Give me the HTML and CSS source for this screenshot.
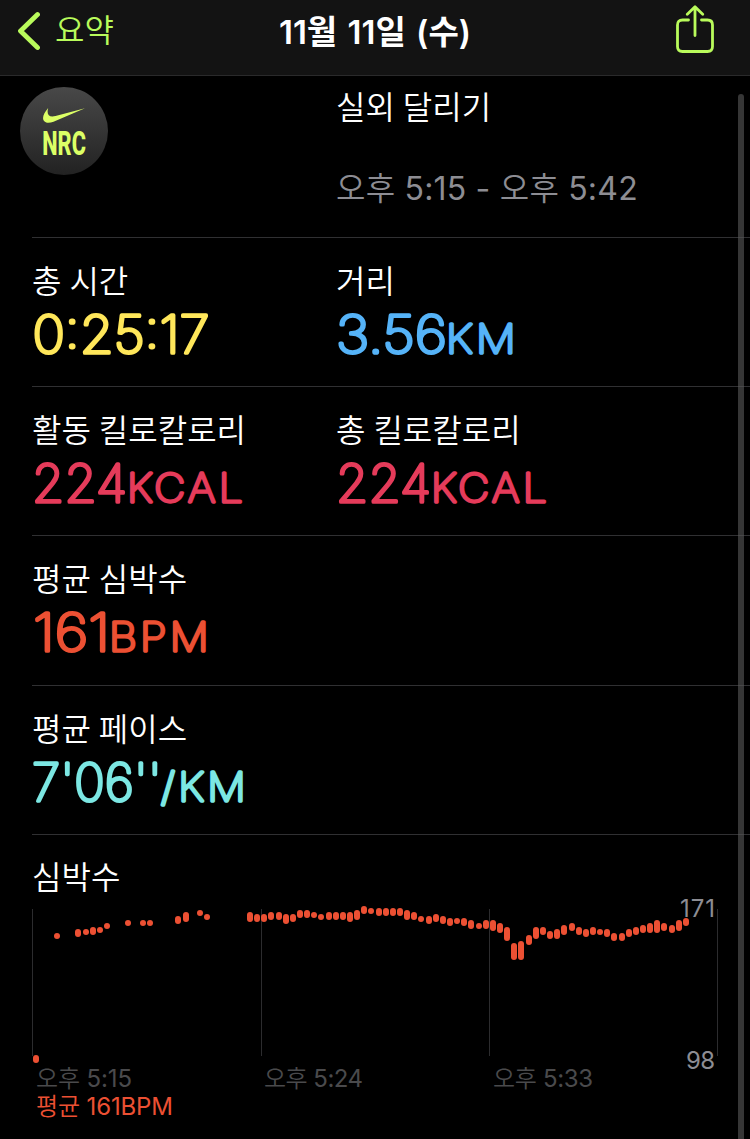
FILE: index.html
```html
<!DOCTYPE html>
<html lang="ko">
<head>
    <meta charset="UTF-8">
    <meta name="viewport" content="width=device-width, initial-scale=1.0">
    <title>실외 달리기</title>
    <link rel="stylesheet" href="styles.css">
</head>
<body>
    <!-- 상단 바 -->
    <header class="nav-bar">
        <a href="#" class="back-button">
            <svg width="24" height="40" viewBox="0 0 24 40"><path d="M21.5 3.5 L4.5 20 L21.5 36.5"/></svg>
            <span>요약</span>
        </a>
        <h1>11월 11일 (수)</h1>
        <button class="share-button" aria-label="공유">
            <svg width="40" height="50" viewBox="0 0 40 50">
                <path d="M13.5 15 H7.5 Q2.5 15 2.5 20 V41.5 Q2.5 46.5 7.5 46.5 H32.5 Q37.5 46.5 37.5 41.5 V20 Q37.5 15 32.5 15 H26.5"/>
                <path d="M20 30.5 V2.5 M12.3 9.3 L20 1.7 L27.7 9.3"/>
            </svg>
        </button>
    </header>

    <main>
        <!-- 운동 종류 -->
        <section class="workout">
            <div class="app-icon">
                <svg width="42" height="15" viewBox="0 0 42 15"><path d="M5.2 0 C0.5 5.5 -1.6 10.5 1.6 13.6 C3.6 15.5 7.2 15 10.5 13.7 L42 0.2 L12.5 8 C6 9.7 3.3 6.5 5.2 0 Z"/></svg>
                <span>NRC</span>
            </div>
            <div class="workout-info">
                <p class="label">실외 달리기</p>
                <p class="period">오후 5:15 - 오후 5:42</p>
            </div>
        </section>

        <!-- 기록 -->
        <section class="row">
            <div class="cell">
                <p class="label">총 시간</p>
                <svg class="value time" width="300" height="60"><text x="0.500" y="49" textLength="177" lengthAdjust="spacingAndGlyphs">0:25:17</text></svg>
            </div>
            <div class="cell">
                <p class="label">거리</p>
                <svg class="value distance" width="300" height="60"><text x="0" y="49" textLength="111" lengthAdjust="spacingAndGlyphs">3.56</text><text class="unit" x="110" y="49" textLength="73" lengthAdjust="spacingAndGlyphs">KM</text></svg>
            </div>
        </section>
        <section class="row">
            <div class="cell">
                <p class="label">활동 킬로칼로리</p>
                <svg class="value calorie" width="300" height="60"><text x="0" y="49" textLength="95" lengthAdjust="spacingAndGlyphs">224</text><text class="unit" x="95" y="49" textLength="119" lengthAdjust="spacingAndGlyphs">KCAL</text></svg>
            </div>
            <div class="cell">
                <p class="label">총 킬로칼로리</p>
                <svg class="value calorie" width="300" height="60"><text x="0" y="49" textLength="95" lengthAdjust="spacingAndGlyphs">224</text><text class="unit" x="95" y="49" textLength="119" lengthAdjust="spacingAndGlyphs">KCAL</text></svg>
            </div>
        </section>
        <section class="row">
            <div class="cell">
                <p class="label">평균 심박수</p>
                <svg class="value heart" width="300" height="60"><text x="1" y="49" textLength="77" lengthAdjust="spacingAndGlyphs">161</text><text class="unit" x="77" y="49" textLength="103" lengthAdjust="spacingAndGlyphs">BPM</text></svg>
            </div>
        </section>
        <section class="row">
            <div class="cell">
                <p class="label">평균 페이스</p>
                <svg class="value pace" width="300" height="60"><text x="0" y="49" textLength="130" lengthAdjust="spacingAndGlyphs">7'06''</text><text class="unit" x="129" y="49" textLength="88" lengthAdjust="spacingAndGlyphs">/KM</text></svg>
            </div>
        </section>

        <!-- 심박수 그래프 -->
        <section class="chart">
            <p class="label">심박수</p>
            <svg class="chart-plot" width="750" height="249" viewBox="0 -10 750 249">
                <path class="grid" d="M32.5 9 V156 M261.5 9 V156 M489.5 9 V156 M717.5 9 V156"/>
                <g id="beats"></g>
                <text class="limit" x="680" y="17" textLength="35">171</text>
                <text class="limit" x="686" y="169" textLength="29">98</text>
                <text class="tick" x="36" y="187" textLength="96">오후 5:15</text>
                <text class="tick" x="264" y="187" textLength="99">오후 5:24</text>
                <text class="tick" x="493" y="187" textLength="100">오후 5:33</text>
                <text class="average" x="36" y="215" textLength="137">평균 161BPM</text>
            </svg>
        </section>
    </main>
    <div class="scrollbar"></div>

    <script>
        // [x, 위, 아래]
        const beats = [
            [36, 155, 163], [57, 33, 39], [78, 29, 37], [86, 29, 35], [93, 27, 35], [100, 27, 33],
            [107, 23, 29], [128, 20, 26], [143, 20, 26], [150, 20, 26], [178, 16, 24], [186, 12, 22],
            [200, 10, 16], [207, 14, 20], [250, 12, 22], [257, 14, 22], [264, 14, 22], [271, 12, 20],
            [279, 12, 20], [286, 14, 24], [293, 14, 22], [300, 10, 18], [307, 10, 18], [314, 12, 18],
            [321, 14, 20], [329, 12, 20], [336, 12, 20], [343, 12, 20], [350, 12, 22], [357, 10, 20],
            [364, 6, 14], [371, 8, 14], [379, 8, 16], [386, 8, 16], [393, 8, 16], [400, 8, 16],
            [407, 10, 20], [414, 12, 20], [421, 16, 22], [429, 16, 24], [436, 14, 22], [443, 16, 24],
            [450, 18, 26], [457, 18, 24], [464, 18, 26], [471, 20, 29], [479, 23, 29], [486, 20, 29],
            [493, 20, 31], [500, 23, 33], [507, 27, 41], [514, 43, 60], [521, 41, 60], [529, 35, 45],
            [536, 27, 39], [543, 27, 35], [550, 31, 39], [557, 29, 39], [564, 25, 35], [572, 23, 31],
            [579, 27, 35], [586, 29, 37], [593, 27, 35], [600, 29, 35], [607, 29, 37], [614, 33, 41],
            [622, 33, 41], [629, 29, 37], [636, 27, 35], [643, 25, 33], [650, 23, 33], [657, 20, 33],
            [664, 23, 31], [672, 25, 33], [679, 20, 31], [686, 18, 26]
        ];

        document.getElementById('beats').innerHTML = beats.map(([x, top, bottom]) =>
            `<rect x="${x - 3}" y="${top}" width="6" height="${bottom - top}" rx="3"/>`
        ).join('');
    </script>
</body>
</html>
```
FILE: styles.css
```css
* {
    box-sizing: border-box;
}

body {
    margin: 0;
    height: 1139px;
    overflow: hidden;
    background-color: #000;
    color: #fff;
    font-family: Inter, "Noto Sans CJK KR DemiLight", "Noto Sans CJK KR", sans-serif;
}

h1, p {
    margin: 0;
}

svg {
    display: block;
}

/* 상단 바 */
.nav-bar {
    display: grid;
    grid-template-columns: 200px 1fr 200px;
    height: 76px;
    padding: 0 35px 0 16px;
    background-color: #131313;
    border-bottom: 1px solid #2a2a2b;
}

.back-button {
    display: flex;
    gap: 15px;
    height: 62px;
    align-items: center;
    color: #b9fb5b;
    font-size: 32px;
    font-weight: 350;
    line-height: 62px;
    text-decoration: none;
}

.back-button svg,
.share-button svg {
    fill: none;
    stroke: #b9fb5b;
    stroke-width: 4.8;
    stroke-linecap: round;
    stroke-linejoin: round;
}

.nav-bar h1 {
    font-family: Inter, "Noto Sans CJK KR", sans-serif;
    font-size: 33px;
    font-weight: 600;
    line-height: 64px;
    text-align: center;
    white-space: nowrap;
    margin-left: 19px;
    word-spacing: 2px;
}

.share-button {
    justify-self: end;
    align-self: start;
    margin-top: 5px;
    padding: 0;
    border: none;
    background: none;
}

.share-button svg {
    stroke-width: 2.8;
}

/* 운동 종류 */
.workout {
    display: flex;
    height: 162px;
    margin-left: 32px;
    border-bottom: 1px solid #303032;
}

.app-icon {
    display: flex;
    flex-direction: column;
    align-items: center;
    width: 88px;
    height: 88px;
    margin: 11px 0 0 -12px;
    padding-top: 21px;
    border-radius: 50%;
    background: linear-gradient(#484848, #222);
    color: #dcff66;
}

.app-icon svg {
    fill: #dcff66;
}

.app-icon span {
    font-family: Roboto, sans-serif;
    font-size: 34px;
    font-weight: 800;
    line-height: 41px;
    transform: scaleX(0.64);
}

.workout-info {
    margin-left: 228px;
    padding-top: 9px;
}

.label {
    font-size: 32px;
    font-weight: 350;
    line-height: 40px;
    white-space: nowrap;
    font-family: "Noto Sans CJK KR", sans-serif;
    word-spacing: -1px;
}

.period {
    margin-top: 44px;
    color: #8d8d93;
    font-size: 32px;
    font-weight: 400;
    line-height: 40px;
    white-space: nowrap;
    letter-spacing: 0.2px;
}

/* 기록 */
.row {
    display: grid;
    grid-template-columns: 304px 1fr;
    height: 149.2px;
    margin-left: 32px;
    padding-top: 21px;
    border-bottom: 1px solid #303032;
}

/* 끝이 둥근 얇은 숫자 */
.value {
    margin-top: 5px;
    overflow: visible;
    font-size: 52px;
    font-weight: 100;
    stroke-width: 3.7;
    stroke-linejoin: round;
}

.value .unit {
    font-size: 39px;
    letter-spacing: 3px;
    stroke-width: 3.4;
}

.time { fill: #ffe75a; stroke: #ffe75a; }
.distance { fill: #55b3f8; stroke: #55b3f8; }
.calorie { fill: #e53b5a; stroke: #e53b5a; }
.heart { fill: #ec5033; stroke: #ec5033; }
.pace { fill: #7ce7e3; stroke: #7ce7e3; }

/* 심박수 그래프 */
.chart {
    padding-top: 20px;
}

.chart .label {
    margin-left: 32px;
}

.chart-plot {
    margin-top: -5px;
    font-size: 24px;
    font-weight: 400;
}

.grid {
    stroke: #2c2c2e;
}

#beats {
    fill: #ec5033;
}

.limit {
    fill: #8d8d93;
}

.tick {
    fill: #4a4a4c;
}

.average {
    fill: #ec5033;
}

.scrollbar {
    position: fixed;
    top: 94px;
    right: 6px;
    bottom: -10px;
    width: 6px;
    border-radius: 3px;
    background-color: rgba(90, 90, 90, 0.6);
}
```
